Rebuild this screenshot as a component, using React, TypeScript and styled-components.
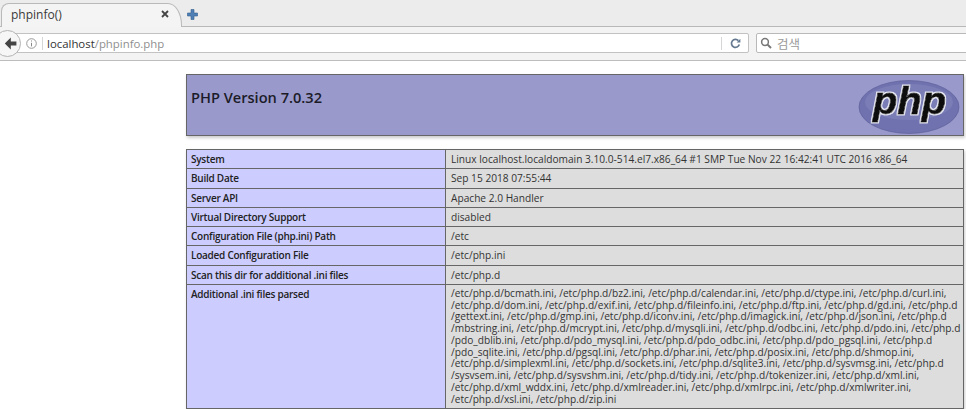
import React from "react";
import styled, { createGlobalStyle } from "styled-components";

const Global = createGlobalStyle`
  html, body { margin: 0; padding: 0; background: #fff; overflow: hidden; }
  body { width: 966px; height: 409px; font-family: "Open Sans", "Noto Sans CJK KR", sans-serif; }
`;

const Page = styled.div`
  width: 966px;
  height: 409px;
  overflow: hidden;
  display: flex;
  flex-direction: column;
`;
const TabBar = styled.div`
  height: 27px;
  flex: none;
  background: #ececec;
  border-bottom: 1px solid #b9b9b9;
  box-sizing: border-box;
  display: flex;
  align-items: flex-end;
  position: relative;
`;
const Tab = styled.div`
  width: 181px;
  height: 24px;
  margin-left: 1px;
  margin-bottom: -1px;
  background: #f4f4f4;
  border: 1px solid #b9b9b9;
  border-bottom: none;
  border-radius: 8px 14px 0 0 / 8px 22px 0 0;
  box-sizing: border-box;
  display: flex;
  align-items: center;
  justify-content: space-between;
  padding: 0 12px 3px 9px;
  font-size: 12px;
  color: #3a3a3a;
`;
const NewTab = styled.svg`
  margin: 0 0 6px 5px;
`;
const CloseGlyph = styled.svg`
  display: block;
`;
const NavBar = styled.div`
  height: 34px;
  flex: none;
  background: #f3f3f3;
  border-bottom: 1px solid #bdbdbd;
  box-sizing: border-box;
  display: flex;
  align-items: center;
  gap: 7px;
  padding: 0 0 1px 0;
  position: relative;
`;
const BackButton = styled.div`
  position: absolute;
  left: -6px;
  top: 3px;
  width: 27px;
  height: 27px;
  border-radius: 50%;
  background: #f6f6f6;
  border: 1px solid #b4b4b4;
  box-sizing: border-box;
  display: flex;
  align-items: center;
  justify-content: center;
  padding-left: 6px;
  z-index: 1;
`;
const UrlBox = styled.div`
  flex: none;
  margin-left: 8px;
  width: 741px;
  height: 20px;
  background: #fff;
  border: 1px solid #c2c2c2;
  border-radius: 2px;
  box-sizing: border-box;
  display: flex;
  align-items: center;
  padding: 1px 0 0 17px;
  font-size: 11.4px;
`;
const InfoIcon = styled.svg`
  flex: none;
  margin: -1px 5px 0 0;
`;
const Sep = styled.div`
  width: 1px;
  height: 13px;
  margin-top: -1px;
  background: #d6d6d6;
  flex: none;
`;
const Host = styled.span`
  margin-left: 4px;
  color: #333;
`;
const Path = styled.span`
  color: #8f8f8f;
`;
const Spacer = styled.div`
  flex: 1;
`;
const Reload = styled.svg`
  margin: -1px 7px 0 8px;
  flex: none;
`;
const SearchBox = styled.div`
  flex: none;
  width: 220px;
  height: 20px;
  background: #fff;
  border: 1px solid #b9b9b9;
  border-radius: 2px;
  box-sizing: border-box;
  display: flex;
  align-items: center;
  padding-left: 3px;
  gap: 5px;
  font-size: 12.5px;
  color: #9a9a9a;
  font-family: "Noto Sans CJK KR", sans-serif;
`;
const Content = styled.div`
  flex: 1;
  min-height: 0;
  padding: 13px 0 0 186px;
  color: #222;
`;
const Header = styled.div`
  width: 778px;
  height: 62px;
  background: #9999cc;
  border: 1px solid #666;
  box-sizing: border-box;
  box-shadow: 1px 2px 3px #ccc;
  display: flex;
  justify-content: space-between;
  align-items: flex-start;
  padding: 12px 3px 0 4px;
`;
const Title = styled.h1`
  margin: 0;
  font-size: 14.6px;
  line-height: 20px;
  font-weight: 600;
  color: #1c1c28;
`;
const Logo = styled.svg`
  margin-top: -7px;
  flex: none;
`;
const Table = styled.div`
  margin-top: 13px;
  width: 778px;
  border-top: 1px solid #666;
  border-left: 1px solid #666;
  border-right: 1px solid #666;
  box-shadow: 1px 2px 3px #ccc;
  display: grid;
  grid-template-columns: 259px 1fr;
  box-sizing: border-box;
`;
const Key = styled.div<{ $h: number }>`
  height: ${(p) => p.$h}px;
  background: #ccccff;
  border-bottom: 1px solid #666;
  border-right: 1px solid #666;
  box-sizing: border-box;
  padding: 3px 4px 0;
  font-size: 10px;
  line-height: 13px;
  font-weight: 600;
  letter-spacing: -0.25px;
  color: #222;
  white-space: nowrap;
`;
const Val = styled.div<{ $h: number }>`
  height: ${(p) => p.$h}px;
  background: #dddddd;
  border-bottom: 1px solid #666;
  box-sizing: border-box;
  padding: 3px 5px 0;
  font-size: 10.16px;
  line-height: 13px;
  color: #333;
  white-space: nowrap;
  overflow: hidden;
`;
const Line = styled.div`
  height: 11.75px;
  line-height: 11.75px;
`;

const rows: [string, string][] = [
  ["System", "Linux localhost.localdomain 3.10.0-514.el7.x86_64 #1 SMP Tue Nov 22 16:42:41 UTC 2016 x86_64"],
  ["Build Date", "Sep 15 2018 07:55:44"],
  ["Server API", "Apache 2.0 Handler"],
  ["Virtual Directory Support", "disabled"],
  ["Configuration File (php.ini) Path", "/etc"],
  ["Loaded Configuration File", "/etc/php.ini"],
  ["Scan this dir for additional .ini files", "/etc/php.d"],
];

const iniLines = [
  "/etc/php.d/bcmath.ini, /etc/php.d/bz2.ini, /etc/php.d/calendar.ini, /etc/php.d/ctype.ini, /etc/php.d/curl.ini,",
  "/etc/php.d/dom.ini, /etc/php.d/exif.ini, /etc/php.d/fileinfo.ini, /etc/php.d/ftp.ini, /etc/php.d/gd.ini, /etc/php.d",
  "/gettext.ini, /etc/php.d/gmp.ini, /etc/php.d/iconv.ini, /etc/php.d/imagick.ini, /etc/php.d/json.ini, /etc/php.d",
  "/mbstring.ini, /etc/php.d/mcrypt.ini, /etc/php.d/mysqli.ini, /etc/php.d/odbc.ini, /etc/php.d/pdo.ini, /etc/php.d",
  "/pdo_dblib.ini, /etc/php.d/pdo_mysql.ini, /etc/php.d/pdo_odbc.ini, /etc/php.d/pdo_pgsql.ini, /etc/php.d",
  "/pdo_sqlite.ini, /etc/php.d/pgsql.ini, /etc/php.d/phar.ini, /etc/php.d/posix.ini, /etc/php.d/shmop.ini,",
  "/etc/php.d/simplexml.ini, /etc/php.d/sockets.ini, /etc/php.d/sqlite3.ini, /etc/php.d/sysvmsg.ini, /etc/php.d",
  "/sysvsem.ini, /etc/php.d/sysvshm.ini, /etc/php.d/tidy.ini, /etc/php.d/tokenizer.ini, /etc/php.d/xml.ini,",
  "/etc/php.d/xml_wddx.ini, /etc/php.d/xmlreader.ini, /etc/php.d/xmlrpc.ini, /etc/php.d/xmlwriter.ini,",
  "/etc/php.d/xsl.ini, /etc/php.d/zip.ini",
];

export default function App() {
  return (
    <Page>
      <Global />
      <TabBar>
        <Tab>
          <span>phpinfo()</span>
          <CloseGlyph width="8" height="8" viewBox="0 0 8 8">
            <path d="M1 1L7 7M7 1L1 7" stroke="#444" strokeWidth="1.8" />
          </CloseGlyph>
        </Tab>
        <NewTab width="11" height="11" viewBox="0 0 11 11">
          <path d="M4 .5h3v3.5h3.5v3H7v3.5H4V7H.5V4H4z" fill="#4f7fb5" stroke="#34608f" strokeWidth=".6" />
        </NewTab>
      </TabBar>
      <NavBar>
        <BackButton>
          <svg width="13" height="13" viewBox="0 0 13 13">
            <path d="M6.8 .6L.8 6.5l6 5.9V8.6H12.4V4.4H6.8z" fill="#444" />
          </svg>
        </BackButton>
        <UrlBox>
          <InfoIcon width="11" height="11" viewBox="0 0 11 11">
            <circle cx="5.5" cy="5.5" r="4.8" fill="none" stroke="#999" />
            <path d="M5.5 2.5v1M5.5 4.8v3.6" stroke="#888" strokeWidth="1" />
          </InfoIcon>
          <Sep />
          <Host>localhost</Host>
          <Path>/phpinfo.php</Path>
          <Spacer />
          <Sep />
          <Reload width="11" height="11" viewBox="0 0 11 11">
            <path d="M9.3 6.5A4 4 0 1 1 8.4 2.6" fill="none" stroke="#64788f" strokeWidth="1.7" />
            <path d="M6.6 4.4L10.4 4.4 10.4 .8z" fill="#64788f" />
          </Reload>
        </UrlBox>
        <SearchBox>
          <svg width="12" height="12" viewBox="0 0 12 12">
            <circle cx="5" cy="5" r="3.4" fill="none" stroke="#777" strokeWidth="1.5" />
            <path d="M7.6 7.6L11 11" stroke="#777" strokeWidth="2" />
          </svg>
          <span>검색</span>
        </SearchBox>
      </NavBar>
      <Content>
        <Header>
          <Title>PHP Version 7.0.32</Title>
          <Logo width="102" height="54" viewBox="0 0 102 54">
            <defs>
              <filter id="halo" x="-10%" y="-10%" width="120%" height="120%">
                <feMorphology in="SourceAlpha" operator="dilate" radius="0.7" result="fat" />
                <feFlood floodColor="#ffffff" floodOpacity="0.85" />
                <feComposite in2="fat" operator="in" result="white" />
                <feMerge>
                  <feMergeNode in="white" />
                  <feMergeNode in="SourceGraphic" />
                </feMerge>
              </filter>
            </defs>
            <ellipse cx="51" cy="27" rx="50" ry="26.5" fill="#6f72ae" stroke="#5a5c96" strokeWidth=".6" />
            <ellipse cx="51" cy="22" rx="44" ry="18" fill="#8387bd" opacity=".55" />
            <text
              x="15"
              y="34"
              fontFamily="'Liberation Sans', sans-serif"
              fontStyle="italic"
              fontWeight="700"
              fontSize="38"
              textLength="73"
              lengthAdjust="spacingAndGlyphs"
              fill="#0c0c0e"
              stroke="#0c0c0e"
              strokeWidth=".8"
              filter="url(#halo)"
            >
              php
            </text>
          </Logo>
        </Header>
        <Table>
          {rows.map(([k, v]) => (
            <React.Fragment key={k}>
              <Key $h={19.25}>{k}</Key>
              <Val $h={19.25}>{v}</Val>
            </React.Fragment>
          ))}
          <Key $h={124}>Additional .ini files parsed</Key>
          <Val $h={124}>
            {iniLines.map((l) => (
              <Line key={l}>{l}</Line>
            ))}
          </Val>
        </Table>
      </Content>
    </Page>
  );
}
